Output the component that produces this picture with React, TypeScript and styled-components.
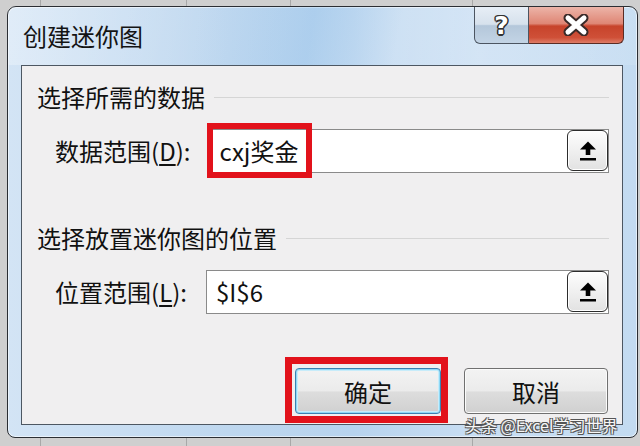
import styled, { createGlobalStyle } from "styled-components";

const GlobalStyles = createGlobalStyle`
  html, body {
    margin: 0;
    padding: 0;
  }
  body {
    width: 640px;
    height: 446px;
    overflow: hidden;
    background-color: #cfcfcf;
    background-image:
      linear-gradient(#a8a8a8, #a8a8a8),
      linear-gradient(#a8a8a8, #a8a8a8),
      linear-gradient(#a8a8a8, #a8a8a8),
      linear-gradient(#a8a8a8, #a8a8a8);
    background-size: 1px 100%;
    background-position: 40px 0, 186px 0, 290px 0, 472px 0;
    background-repeat: no-repeat;
    font-family: "Noto Sans CJK SC", "Noto Sans", sans-serif;
  }
`;

const Window = styled.div`
  position: relative;
  box-sizing: border-box;
  width: 631px;
  height: 432px;
  margin: 6px 0 0 7px;
  border: 1px solid #2b2e33;
  border-radius: 9px 9px 8px 8px;
  background: linear-gradient(90deg, #d3e4f5 0%, #bed7ef 35%, #b7d3ee 55%, #c9def3 75%, #c3dbf1 100%);
  box-shadow: inset 0 0 0 1px rgba(255, 255, 255, 0.55);
  display: flex;
  flex-direction: column;
  overflow: hidden;
`;

const TitleBar = styled.div`
  height: 58px;
  flex: none;
  display: flex;
  align-items: flex-start;
  padding: 0 13px 0 15px;
  background: linear-gradient(
    100deg,
    rgba(255, 255, 255, 0.3) 0%,
    rgba(255, 255, 255, 0.05) 30%,
    rgba(150, 195, 235, 0.35) 48%,
    rgba(255, 255, 255, 0.25) 62%,
    rgba(255, 255, 255, 0.1) 100%
  );
`;

const Title = styled.h1`
  flex: 1;
  align-self: center;
  margin: 0;
  font-size: 24px;
  font-weight: 400;
  line-height: 30px;
  color: #141414;
`;

const CaptionButton = styled.div<{ $kind: "help" | "close" }>`
  box-sizing: border-box;
  height: 37px;
  width: ${(p) => (p.$kind === "help" ? "55px" : "95px")};
  display: flex;
  align-items: center;
  justify-content: center;
  border: 1px solid ${(p) => (p.$kind === "help" ? "#4c5561" : "#5a2c24")};
  border-top: none;
  ${(p) => (p.$kind === "close" ? "border-left: none;" : "")}
  border-radius: ${(p) => (p.$kind === "help" ? "0 0 0 6px" : "0 0 6px 0")};
  background: ${(p) =>
    p.$kind === "help"
      ? "linear-gradient(#e7eef6 0%, #d6e1ec 48%, #b4c7da 52%, #c3d4e5 100%)"
      : "linear-gradient(#ecb4a8 0%, #df8675 46%, #c7432b 53%, #cf5038 85%, #de7c67 100%)"};
`;

const HelpGlyph = styled.span`
  font-family: "DejaVu Sans", sans-serif;
  font-size: 25px;
  font-weight: 700;
  line-height: 1;
  color: #ffffff;
  text-shadow: -1px -1px 0 #333, 1px -1px 0 #333, -1px 1px 0 #333, 1px 1px 0 #333,
    0 1.5px 0 #333, 0 -1.5px 0 #333, 1.5px 0 0 #333, -1.5px 0 0 #333;
`;

const Panel = styled.div`
  box-sizing: border-box;
  height: 360px;
  margin: 0 14px 12px 13px;
  border: 1px solid #4d5762;
  background: #f0eff0;
  display: flex;
  flex-direction: column;
  padding: 16px 13px 10px 15px;
`;

const Heading = styled.div<{ $gap: number }>`
  display: flex;
  align-items: center;
  margin-top: ${(p) => p.$gap}px;
  font-size: 24px;
  line-height: 30px;
  color: #111;
`;

const Rule = styled.div`
  flex: 1;
  height: 1px;
  margin-left: 9px;
  background: #d5d5d5;
`;

const Row = styled.div<{ $gap: number }>`
  display: flex;
  align-items: center;
  gap: 19px;
  margin-top: ${(p) => p.$gap}px;
  padding-left: 18px;
`;

const Label = styled.span`
  font-size: 24px;
  line-height: 44px;
  color: #111;
  white-space: nowrap;
`;

const Underline = styled.span`
  text-decoration: underline;
  text-underline-offset: 3px;
`;

const FieldWrap = styled.div`
  position: relative;
  flex: 1;
  display: flex;
`;

const Field = styled.div`
  box-sizing: border-box;
  flex: 1;
  height: 44px;
  display: flex;
  align-items: flex-start;
  padding-left: 9px;
  border: 1px solid #8a8a8a;
  background: #ffffff;
`;

const FieldText = styled.span`
  flex: 1;
  font-size: 24px;
  line-height: 42px;
  color: #111;
`;

const Collapse = styled.div`
  box-sizing: border-box;
  width: 41px;
  height: 41px;
  display: flex;
  align-items: center;
  justify-content: center;
  border: 1.5px solid #2c2c2c;
  border-radius: 6px;
  background: linear-gradient(#fdfdfd 0%, #f0f0f0 50%, #e2e2e2 100%);
  box-shadow: inset 0 0 0 1px #ffffff;
`;

const Highlight = styled.div<{ $l: number; $t: number; $r: number; $b: number; $w: number }>`
  position: absolute;
  left: ${(p) => p.$l}px;
  top: ${(p) => p.$t}px;
  right: ${(p) => p.$r}px;
  bottom: ${(p) => p.$b}px;
  border: ${(p) => p.$w}px solid #e2121b;
  pointer-events: none;
`;

const Footer = styled.div`
  margin-top: auto;
  display: flex;
  justify-content: flex-end;
  gap: 23px;
  padding-right: 1px;
`;

const ButtonWrap = styled.div`
  position: relative;
  display: flex;
`;

const DialogButton = styled.div<{ $width: number; $default?: boolean }>`
  box-sizing: border-box;
  width: ${(p) => p.$width}px;
  height: 46px;
  display: flex;
  align-items: center;
  justify-content: center;
  font-size: 24px;
  color: #111;
  border: 1px solid ${(p) => (p.$default ? "#3c7fb1" : "#707070")};
  border-radius: 4px;
  background: linear-gradient(#f3f3f3 0%, #ebebeb 50%, #dddddd 52%, #d0d0d0 100%);
  box-shadow: ${(p) =>
    p.$default
      ? "inset 0 0 0 1px #8fd8f5, inset 0 0 0 2px #c7ecfa"
      : "inset 0 0 0 1px #fbfbfb"};
`;

const Watermark = styled.span`
  position: absolute;
  left: 457px;
  top: 409px;
  font-size: 16px;
  line-height: 18px;
  color: #f7f7f7;
  white-space: nowrap;
  text-shadow: -1px -1px 0 #555, 1px -1px 0 #555, -1px 1px 0 #555, 1px 1px 0 #555;
`;

function CloseIcon() {
  return (
    <svg width="28" height="22" viewBox="0 0 28 22">
      <path d="M6 4 L22 18 M22 4 L6 18" stroke="#3a2a28" strokeWidth="9" strokeLinecap="round" />
      <path d="M6 4 L22 18 M22 4 L6 18" stroke="#ffffff" strokeWidth="5" strokeLinecap="round" />
    </svg>
  );
}

function UploadIcon() {
  return (
    <svg width="18" height="20" viewBox="0 0 18 20">
      <path d="M9 0.5 L17 8.5 L11.3 8.5 L11.3 14 L6.7 14 L6.7 8.5 L1 8.5 Z" fill="#000" />
      <rect x="1" y="17" width="16" height="2.5" fill="#000" />
    </svg>
  );
}

function App() {
  return (
    <>
      <GlobalStyles />
      <Window>
        <TitleBar>
          <Title>创建迷你图</Title>
          <CaptionButton $kind="help">
            <HelpGlyph>?</HelpGlyph>
          </CaptionButton>
          <CaptionButton $kind="close">
            <CloseIcon />
          </CaptionButton>
        </TitleBar>
        <Panel>
          <Heading $gap={0}>
            选择所需的数据
            <Rule />
          </Heading>
          <Row $gap={17}>
            <Label>
              数据范围(<Underline>D</Underline>):
            </Label>
            <FieldWrap>
              <Field>
                <FieldText>cxj奖金</FieldText>
                <Collapse>
                  <UploadIcon />
                </Collapse>
              </Field>
              <Highlight $l={-2} $t={-6} $r={297} $b={-5} $w={6} />
            </FieldWrap>
          </Row>
          <Heading $gap={50}>
            选择放置迷你图的位置
            <Rule />
          </Heading>
          <Row $gap={17}>
            <Label>
              位置范围(<Underline>L</Underline>):
            </Label>
            <FieldWrap>
              <Field>
                <FieldText>$I$6</FieldText>
                <Collapse>
                  <UploadIcon />
                </Collapse>
              </Field>
            </FieldWrap>
          </Row>
          <Footer>
            <ButtonWrap>
              <DialogButton $width={146} $default>
                确定
              </DialogButton>
              <Highlight $l={-10} $t={-11} $r={-7} $b={-9} $w={7} />
            </ButtonWrap>
            <DialogButton $width={144}>取消</DialogButton>
          </Footer>
        </Panel>
        <Watermark>头条 @Excel学习世界</Watermark>
      </Window>
    </>
  );
}

export default App;
